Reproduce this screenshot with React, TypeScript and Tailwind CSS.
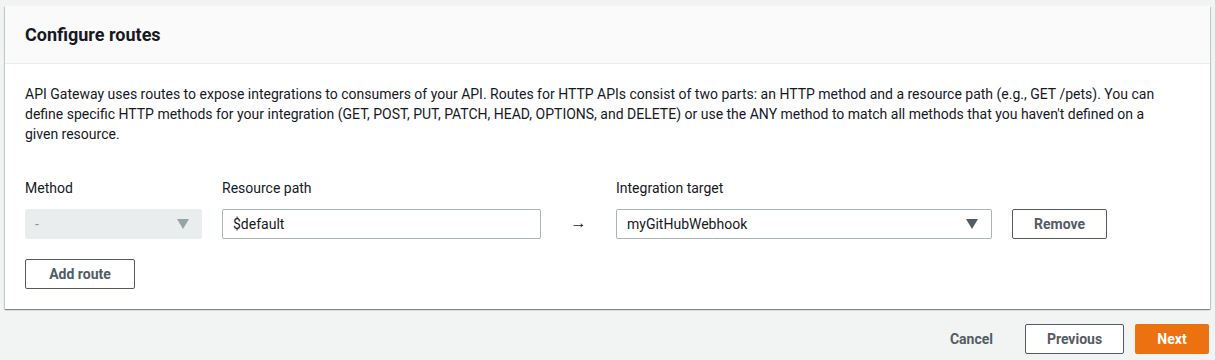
import React from 'react';

const font = { fontFamily: 'Roboto, "Open Sans", Arial, sans-serif' };

const Caret = ({ color }: { color: string }) => (
  <svg width="12" height="10" viewBox="0 0 12 10" className="shrink-0">
    <path d="M0 0 H12 L6 10 Z" fill={color} />
  </svg>
);

export default function App() {
  return (
    <div className="h-[360px] overflow-hidden bg-[#f2f3f3] pt-[6px] text-[#16191f]" style={font}>
      <div className="mx-[5px] bg-white shadow-[0_1px_1px_0_rgba(0,28,36,0.3),1px_1px_1px_0_rgba(0,28,36,0.15),-1px_1px_1px_0_rgba(0,28,36,0.15)]">
        <div className="bg-[#fafafa] border-b border-[#eaeded] px-[20px] pt-[16px] pb-[15px]">
          <h2 className="text-[18px] leading-[26px] font-bold">Configure routes</h2>
        </div>
        <div className="px-[20px] pt-[20px] pb-[20px]">
          <div className="text-[14px] leading-[20px] whitespace-nowrap">
            <div>API Gateway uses routes to expose integrations to consumers of your API. Routes for HTTP APIs consist of two parts: an HTTP method and a resource path (e.g., GET /pets). You can</div>
            <div>define specific HTTP methods for your integration (GET, POST, PUT, PATCH, HEAD, OPTIONS, and DELETE) or use the ANY method to match all methods that you haven't defined on a</div>
            <div>given resource.</div>
          </div>

          <div className="mt-[34px] flex items-end">
            <div className="w-[177px]">
              <div className="text-[14px] leading-[20px] mb-[11px]">Method</div>
              <div className="h-[30px] rounded-[2px] bg-[#eaeded] flex items-center justify-between pl-[10px] pr-[13px] text-[14px] text-[#879596]">
                <span>-</span>
                <Caret color="#95a5a6" />
              </div>
            </div>
            <div className="w-[319px] ml-[20px]">
              <div className="text-[14px] leading-[20px] mb-[11px]">Resource path</div>
              <div className="h-[30px] rounded-[2px] border border-[#aab7b8] flex items-center px-[10px] text-[14px]">
                $default
              </div>
            </div>
            <div className="w-[75px] h-[30px] flex items-center justify-center text-[16px] leading-[16px] pb-[2px]">→</div>
            <div className="w-[376px]">
              <div className="text-[14px] leading-[20px] mb-[11px]">Integration target</div>
              <div className="h-[30px] rounded-[2px] border border-[#aab7b8] flex items-center justify-between pl-[10px] pr-[13px] text-[14px]">
                <span>myGitHubWebhook</span>
                <Caret color="#545b64" />
              </div>
            </div>
            <button className="ml-[20px] w-[95px] h-[30px] rounded-[2px] border border-[#545b64] text-[14px] font-bold text-[#545b64] bg-white">
              Remove
            </button>
          </div>

          <button className="mt-[20px] w-[110px] h-[30px] rounded-[2px] border border-[#545b64] text-[14px] font-bold text-[#545b64] bg-white">
            Add route
          </button>
        </div>
      </div>

      <div className="flex justify-end items-center mt-[15px] pr-[6px]">
        <button className="text-[14px] font-bold text-[#545b64] px-[20px] h-[30px]">Cancel</button>
        <button className="ml-[12px] w-[99px] h-[30px] rounded-[2px] border border-[#545b64] text-[14px] font-bold text-[#545b64] bg-white">
          Previous
        </button>
        <button className="ml-[11px] w-[74px] h-[30px] rounded-[2px] bg-[#ec7211] text-[14px] font-bold text-white">
          Next
        </button>
      </div>
    </div>
  );
}
